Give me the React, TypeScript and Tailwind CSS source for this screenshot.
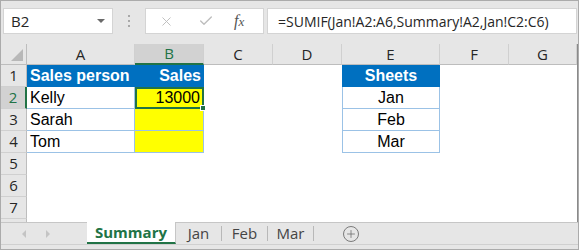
import { Check, X, Plus } from "lucide-react";

const ui = { fontFamily: '"Open Sans", "Noto Sans", sans-serif' };
const cellFont = { fontFamily: '"Liberation Sans", Arial, sans-serif' };

const letters = ["A", "B", "C", "D", "E", "F", "G"];

function ColHeader({ label }: { label: string }) {
  const active = label === "B";
  return (
    <div
      className={`flex items-center justify-center border-r border-r-[#d0d0d0] text-[15px] ${
        active
          ? "border-b-2 border-b-[#217346] bg-[#d2d2d2] text-[#217346]"
          : "border-b border-b-[#bdbdbd] bg-[#e6e6e6] text-[#262626]"
      }`}
      style={ui}
    >
      {label}
    </div>
  );
}

function RowHeader({ n }: { n: number }) {
  const active = n === 2;
  return (
    <div
      className={`flex items-center justify-center border-b border-b-[#d0d0d0] text-[15px] ${
        active
          ? "border-r-2 border-r-[#217346] bg-[#d2d2d2] text-[#217346]"
          : "border-r border-r-[#bdbdbd] bg-[#e6e6e6] text-[#262626]"
      }`}
      style={ui}
    >
      {n}
    </div>
  );
}

function Blank() {
  return <div className="bg-white" />;
}

export default function App() {
  const people = ["Kelly", "Sarah", "Tom"];
  const sheets = ["Jan", "Feb", "Mar"];

  const rows = [];
  for (let r = 1; r <= 8; r++) {
    rows.push(<RowHeader key={`h${r}`} n={r} />);
    // column A
    if (r === 1) {
      rows.push(
        <div key={`a${r}`} className="flex items-center bg-[#0070c0] pl-[3px] text-[16px] font-bold text-white" style={cellFont}>
          Sales person
        </div>
      );
      rows.push(
        <div key={`b${r}`} className="flex items-center justify-end bg-[#0070c0] pr-[3px] text-[16px] font-bold text-white" style={cellFont}>
          Sales
        </div>
      );
    } else if (r <= 4) {
      rows.push(
        <div key={`a${r}`} className="flex items-center border-r border-b border-[#9bc2e6] bg-white pl-[3px] text-[16px] text-black" style={cellFont}>
          {people[r - 2]}
        </div>
      );
      if (r === 2) {
        rows.push(
          <div key={`b${r}`} className="relative flex items-center justify-end border-2 border-[#217346] bg-[#ffff00] pr-[2px] text-[16px] text-black" style={cellFont}>
            13000
            <span className="absolute -right-[4px] -bottom-[4px] h-[6px] w-[6px] border border-white bg-[#217346]" />
          </div>
        );
      } else {
        rows.push(<div key={`b${r}`} className="border-r border-b border-[#9bc2e6] bg-[#ffff00]" />);
      }
    } else {
      rows.push(<Blank key={`a${r}`} />);
      rows.push(<Blank key={`b${r}`} />);
    }
    rows.push(<Blank key={`c${r}`} />);
    rows.push(<Blank key={`d${r}`} />);
    // column E
    if (r === 1) {
      rows.push(
        <div key={`e${r}`} className="flex items-center justify-center bg-[#0070c0] text-[16px] font-bold text-white" style={cellFont}>
          Sheets
        </div>
      );
    } else if (r <= 4) {
      rows.push(
        <div key={`e${r}`} className="flex items-center justify-center border-x border-b border-[#9bc2e6] bg-white text-[16px] text-black" style={cellFont}>
          {sheets[r - 2]}
        </div>
      );
    } else {
      rows.push(<Blank key={`e${r}`} />);
    }
    rows.push(<Blank key={`f${r}`} />);
    rows.push(<Blank key={`g${r}`} />);
  }

  return (
    <div className="flex h-[250px] w-[579px] flex-col border border-[#ababab] bg-[#e6e6e6]">
      {/* formula bar */}
      <div className="flex h-[43px] items-start pt-[7px] pl-[2px]">
        <div className="flex h-[26px] w-[110px] items-center justify-between border border-[#d4d4d4] bg-white pr-[7px] pl-[7px]">
          <span className="text-[15px] text-[#262626]" style={ui}>B2</span>
          <span className="h-0 w-0 border-x-[4px] border-t-[4px] border-x-transparent border-t-[#6a6a6a]" />
        </div>
        <div className="flex h-[26px] w-[32px] flex-col items-center justify-center gap-[3px]">
          <span className="h-[2px] w-[2px] bg-[#a8a8a8]" />
          <span className="h-[2px] w-[2px] bg-[#a8a8a8]" />
          <span className="h-[2px] w-[2px] bg-[#a8a8a8]" />
        </div>
        <div className="flex h-[26px] w-[119px] items-center border border-[#d4d4d4] bg-white">
          <X className="ml-[13px] h-[15px] w-[15px] text-[#bdbdbd]" strokeWidth={1.5} />
          <Check className="ml-[24px] h-[16px] w-[16px] text-[#bdbdbd]" strokeWidth={2} />
          <span className="ml-[20px] text-[16px] text-[#555] italic" style={{ fontFamily: '"Liberation Serif", serif' }}>
            f<span className="text-[13px]">x</span>
          </span>
        </div>
        <div className="ml-[3px] flex h-[26px] w-[310px] items-center border border-[#d4d4d4] bg-white pl-[10px]">
          <span className="text-[14px] text-[#262626]" style={ui}>=SUMIF(Jan!A2:A6,Summary!A2,Jan!C2:C6)</span>
        </div>
      </div>

      {/* grid */}
      <div className="h-[178px] overflow-hidden border-r border-r-[#8a8a8a]">
        <div className="grid grid-cols-[26px_108px_69px_69px_69px_98px_69px_68px] grid-rows-[21px_repeat(8,22px)]">
          <div className="relative border-r border-b border-r-[#bdbdbd] border-b-[#bdbdbd] bg-[#e6e6e6]">
            <svg className="absolute right-[3px] bottom-[3px]" width="12" height="12" viewBox="0 0 12 12">
              <polygon points="12,0 12,12 0,12" fill="#b8b8b8" />
            </svg>
          </div>
          {letters.map((l) => (
            <ColHeader key={l} label={l} />
          ))}
          {rows}
        </div>
      </div>

      {/* sheet tabs */}
      <div className="flex h-[22px] items-stretch border-t border-[#c6c6c6] text-[15px] text-[#444]" style={ui}>
        <div className="flex w-[86px] items-center gap-[20px] pl-[21px]">
          <span className="h-0 w-0 border-y-[4px] border-r-[4px] border-y-transparent border-r-[#c4c4c4]" />
          <span className="h-0 w-0 border-y-[4px] border-l-[4px] border-y-transparent border-l-[#c4c4c4]" />
        </div>
        <div className="-mt-px flex w-[89px] items-center justify-center border-r border-b-2 border-r-[#c6c6c6] border-b-[#217346] bg-white font-bold text-[#217346]">
          Summary
        </div>
        {sheets.map((s) => (
          <div key={s} className="flex items-center">
            <span className="flex w-[45px] items-center justify-center">{s}</span>
            <span className="h-[15px] w-px bg-[#b8b8b8]" />
          </div>
        ))}
        <div className="ml-[29px] flex items-center">
          <span className="flex h-[16px] w-[16px] items-center justify-center rounded-full border border-[#7a7a7a]">
            <Plus className="h-[12px] w-[12px] text-[#6a6a6a]" strokeWidth={1.5} />
          </span>
        </div>
      </div>
      <div className="h-[5px] border-t border-[#d0d0d0] bg-[#e6e6e6]" />
    </div>
  );
}
